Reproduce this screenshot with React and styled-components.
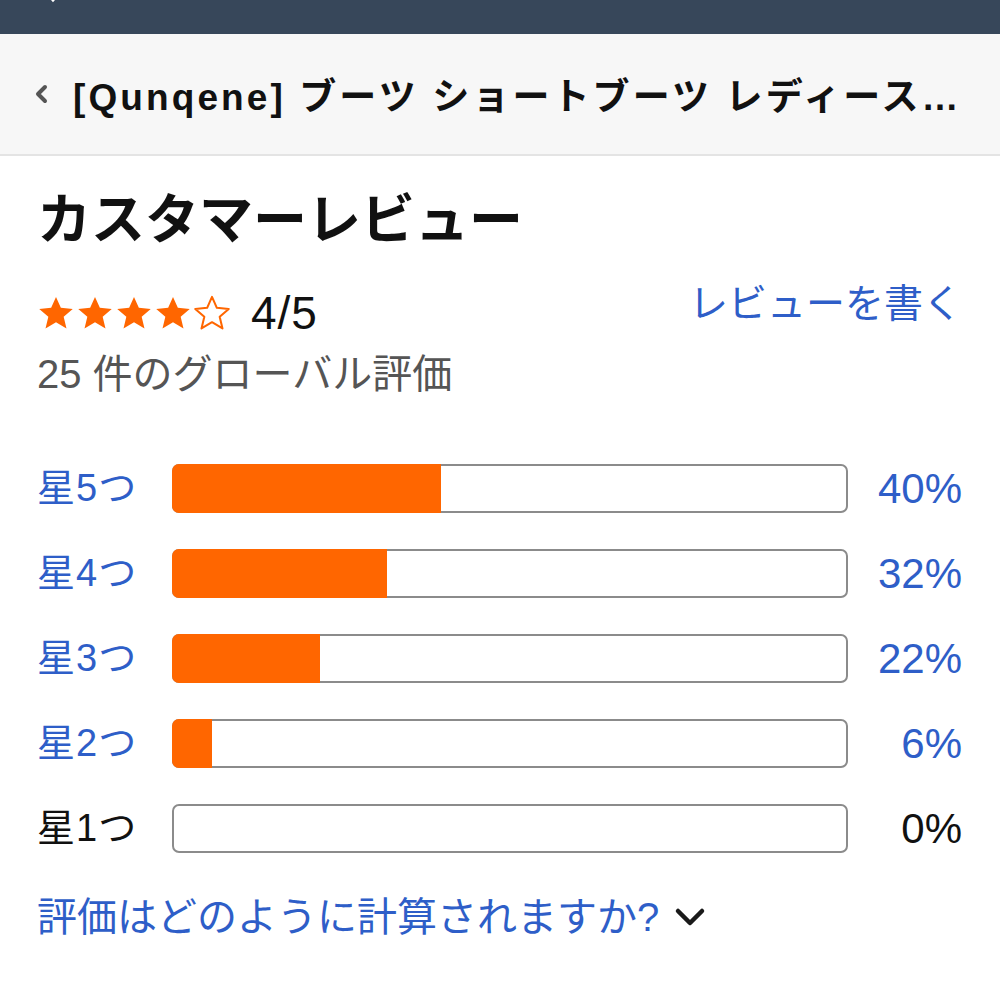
import React from "react";
import styled, { createGlobalStyle } from "styled-components";

const GlobalStyle = createGlobalStyle`
  html, body {
    margin: 0;
    padding: 0;
    background: #ffffff;
  }
  body {
    font-family: "Liberation Sans", "Noto Sans CJK JP", sans-serif;
    color: #111111;
  }
`;

const Page = styled.div`
  width: 1000px;
  min-height: 998px;
  background: #ffffff;
  overflow: hidden;
`;

const TopBar = styled.div`
  height: 34px;
  background-color: #37475a;
  padding-left: 44px;
  overflow: hidden;
`;

const TopIcon = styled.svg`
  display: block;
  margin-top: -13px;
`;

const Header = styled.div`
  height: 120px;
  background-color: #f7f7f7;
  border-bottom: 2px solid #e4e4e4;
  display: flex;
  align-items: center;
  padding: 0 20px 0 34px;
  gap: 24px;
`;

const Back = styled.svg`
  flex-shrink: 0;
`;

const HeaderTitle = styled.div`
  font-size: 37px;
  font-weight: 700;
  color: #111111;
  white-space: nowrap;
  letter-spacing: 3.1px;
`;

const Content = styled.div`
  padding: 28px 38px 0 37px;
`;

const Title = styled.h1`
  margin: 0;
  font-size: 54px;
  line-height: 72px;
  font-weight: 700;
  color: #111111;
`;

const RatingRow = styled.div`
  display: flex;
  justify-content: space-between;
  align-items: flex-start;
  margin-top: 20px;
`;

const StarsLine = styled.div`
  display: flex;
  align-items: center;
  gap: 20px;
  margin-top: 13px;
`;

const Stars = styled.div`
  display: flex;
  gap: 1px;
`;

const Score = styled.span`
  font-size: 46px;
  line-height: 48px;
  color: #111111;
  letter-spacing: 1px;
`;

const Link = styled.a`
  color: #2e5ec8;
  text-decoration: none;
  font-size: 39px;
  line-height: 44px;
  margin-top: 2px;
  font-family: "Noto Sans CJK JP", sans-serif;
`;

const GlobalCount = styled.div`
  font-size: 40px;
  line-height: 50px;
  color: #555555;
  margin-top: 12px;
`;

const Bars = styled.div`
  display: flex;
  flex-direction: column;
  gap: 36px;
  margin-top: 65px;
`;

const BarRow = styled.div`
  display: grid;
  grid-template-columns: 135px 676px 1fr;
  align-items: center;
`;

const BarLabel = styled.span`
  font-size: 38px;
  line-height: 49px;
  letter-spacing: 1px;
  color: ${(p) => (p.$active ? "#2e5ec8" : "#111111")};
`;

const Track = styled.div`
  height: 45px;
  border: 2px solid #8b8b8b;
  border-radius: 7px;
  background: #ffffff;
  display: flex;
`;

const Fill = styled.div`
  margin: -2px 0 -2px -2px;
  background-color: #ff6600;
  border-radius: 7px 0 0 7px;
`;

const Percent = styled.span`
  font-size: 42px;
  line-height: 49px;
  text-align: right;
  color: ${(p) => (p.$active ? "#2e5ec8" : "#111111")};
`;

const HowLink = styled.div`
  display: flex;
  align-items: center;
  gap: 14px;
  margin-top: 38px;
  color: #2e5ec8;
  font-size: 40px;
  line-height: 52px;
`;

const StarIcon = ({ filled }) => (
  <svg width="38" height="36" viewBox="0 0 24 23">
    <path
      d="M12 1.2l3.1 7 7.6.7-5.8 5 1.8 7.5L12 17.4l-6.7 4 1.8-7.5-5.8-5 7.6-.7z"
      fill={filled ? "#ff6600" : "#ffffff"}
      stroke="#ff6600"
      strokeWidth={filled ? 0 : 1.3}
      strokeLinejoin="round"
    />
  </svg>
);

const rows = [
  { label: "星5つ", pct: 40 },
  { label: "星4つ", pct: 32 },
  { label: "星3つ", pct: 22 },
  { label: "星2つ", pct: 6 },
  { label: "星1つ", pct: 0 },
];

export default function App() {
  return (
    <Page>
      <GlobalStyle />
      <TopBar>
        <TopIcon width="18" height="18" viewBox="0 0 18 18">
          <path d="M3 6l6 7 6-7" fill="none" stroke="#ffffff" strokeWidth="3" strokeLinecap="round" />
        </TopIcon>
      </TopBar>
      <Header>
        <Back width="15" height="20" viewBox="0 0 15 20">
          <path d="M11 3L4 10l7 7" fill="none" stroke="#555555" strokeWidth="4" strokeLinecap="round" strokeLinejoin="round" />
        </Back>
        <HeaderTitle>[Qunqene] ブーツ ショートブーツ レディース…</HeaderTitle>
      </Header>
      <Content>
        <Title>カスタマーレビュー</Title>
        <RatingRow>
          <StarsLine>
            <Stars>
              {[1, 2, 3, 4, 5].map((n) => (
                <StarIcon key={n} filled={n <= 4} />
              ))}
            </Stars>
            <Score>4/5</Score>
          </StarsLine>
          <Link href="#">レビューを書く</Link>
        </RatingRow>
        <GlobalCount>25 件のグローバル評価</GlobalCount>
        <Bars>
          {rows.map((r) => (
            <BarRow key={r.label}>
              <BarLabel $active={r.pct > 0}>{r.label}</BarLabel>
              <Track>
                {r.pct > 0 && <Fill style={{ width: `${r.pct}%` }} />}
              </Track>
              <Percent $active={r.pct > 0}>{r.pct}%</Percent>
            </BarRow>
          ))}
        </Bars>
        <HowLink>
          <span>評価はどのように計算されますか?</span>
          <svg width="34" height="22" viewBox="0 0 34 22">
            <path d="M5 5l12 12 12-12" fill="none" stroke="#1a1a1a" strokeWidth="4.5" strokeLinecap="round" strokeLinejoin="round" />
          </svg>
        </HowLink>
      </Content>
    </Page>
  );
}
